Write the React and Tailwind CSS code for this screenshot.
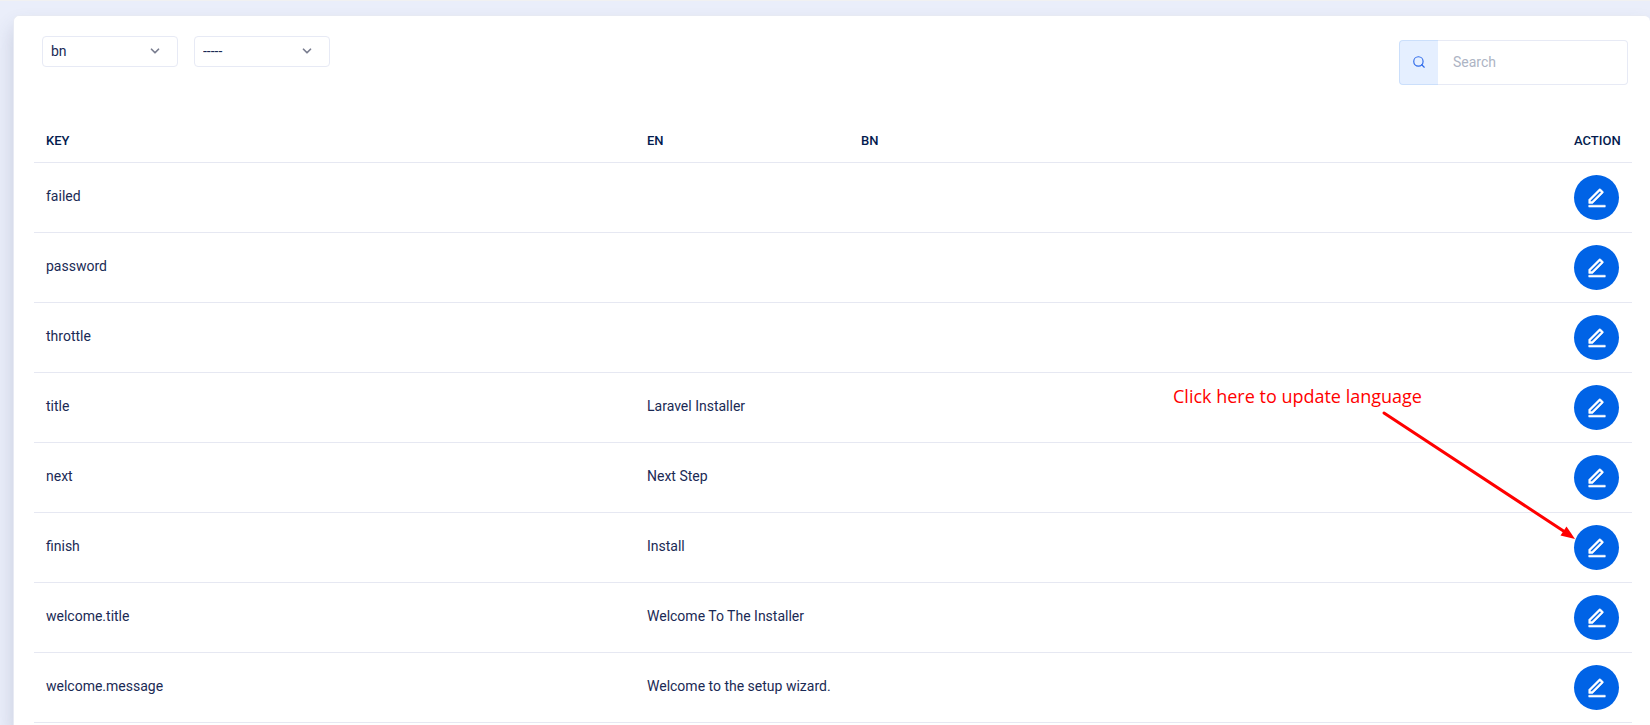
import { RiEditLine } from "react-icons/ri";
import { ChevronDown, Search } from "lucide-react";

const rows = [
  { key: "failed", en: "", bn: "" },
  { key: "password", en: "", bn: "" },
  { key: "throttle", en: "", bn: "" },
  { key: "title", en: "Laravel Installer", bn: "" },
  { key: "next", en: "Next Step", bn: "" },
  { key: "finish", en: "Install", bn: "", hint: true },
  { key: "welcome.title", en: "Welcome To The Installer", bn: "" },
  { key: "welcome.message", en: "Welcome to the setup wizard.", bn: "" },
];

function Filter({ label, options }) {
  return (
    <div className="relative w-34">
      <select
        aria-label={label}
        className="block h-[31px] w-full appearance-none rounded border border-[#e7eaf5] bg-white px-2 pb-[2px] text-sm text-[#1a2a55]"
      >
        {options.map((option) => (
          <option key={option}>{option}</option>
        ))}
      </select>
      <ChevronDown
        className="pointer-events-none absolute top-2 right-4 size-[14px] text-[#7a7e90]"
        strokeWidth={3}
        aria-hidden="true"
      />
    </div>
  );
}

function Hint() {
  return (
    <div className="pointer-events-none absolute right-[57px] bottom-[42px] flex w-[402px] flex-col">
      <p className="font-['Open_Sans',sans-serif] text-lg leading-7 whitespace-nowrap text-[#ff0000]">
        Click here to update language
      </p>
      <svg className="self-end" width="194" height="130" viewBox="0 0 194 130" aria-hidden="true">
        <path d="M3 3L184 122" stroke="#ff0000" strokeWidth="3" strokeLinecap="round" />
        <path d="M194 129L179.500 125.500L185.500 116.500Z" fill="#ff0000" />
      </svg>
    </div>
  );
}

export default function App() {
  return (
    <main className="flex min-h-screen flex-col overflow-hidden border-t border-[#f1f1f1] bg-[#eaeefa] pt-[14px] pl-[13px] font-[Roboto,sans-serif] text-sm text-[#1a2a55]">
      <section className="flex-1 rounded-t-md border-t border-l border-[#e7eaf3] bg-white pt-5 pr-[18px] pl-5 shadow-[0_12px_20px_rgba(60,70,110,0.2)]">
        <div className="flex items-start justify-between pr-1 pl-2">
          <div className="flex gap-4">
            <Filter label="Language" options={["bn", "en"]} />
            <Filter label="Group" options={["-----"]} />
          </div>
          <div className="mt-1 flex h-[45px] w-[229px]">
            <label
              htmlFor="search"
              className="flex w-[39px] items-center justify-center rounded-l border border-r-0 border-[#cbdffb] bg-[#e5efff] pb-[2px] text-[#2f6bea]"
            >
              <Search className="size-[14px]" aria-label="Search" />
            </label>
            <input
              id="search"
              type="search"
              placeholder="Search"
              className="min-w-0 flex-1 rounded-r border border-l-0 border-[#e7eaf5] bg-white px-[15px] pb-[2px] text-sm placeholder:text-[#adb4c4]"
            />
          </div>
        </div>

        <table className="mt-[33px] w-full table-fixed text-left">
          <thead>
            <tr className="h-[44px] border-b border-[#e6e8f2] text-[13px] text-[#031b4e] uppercase">
              <th className="px-3 pt-1 font-medium">Key</th>
              <th className="w-[214px] px-3 pt-1 font-medium">En</th>
              <th className="w-[713px] px-3 pt-1 font-medium">Bn</th>
              <th className="w-[70px] px-3 pt-1 font-medium">Action</th>
            </tr>
          </thead>
          <tbody>
            {rows.map((row) => (
              <tr key={row.key} className="h-[70px] border-b border-[#e6e8f2]">
                <td className="px-3 pb-[2px]">{row.key}</td>
                <td className="px-3 pb-[2px]">{row.en}</td>
                <td className="px-3 pb-[2px]">{row.bn}</td>
                <td className="relative px-3">
                  <button
                    type="button"
                    aria-label={`Edit ${row.key}`}
                    className="flex size-[45px] items-center justify-center rounded-full bg-[#0063e6] pt-[2px] text-white"
                  >
                    <RiEditLine className="size-[22px] stroke-current stroke-[0.6]" />
                  </button>
                  {row.hint && <Hint />}
                </td>
              </tr>
            ))}
          </tbody>
        </table>
      </section>
    </main>
  );
}
